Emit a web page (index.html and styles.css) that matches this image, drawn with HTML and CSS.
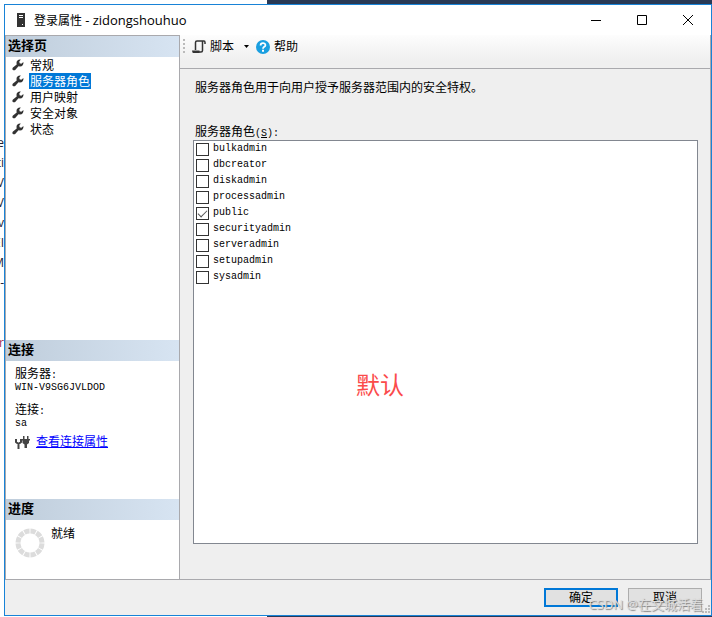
FILE: index.html
```html
<!DOCTYPE html>
<html lang="zh-CN">
<head>
    <meta charset="UTF-8">
    <meta name="viewport" content="width=device-width, initial-scale=1.0">
    <title>登录属性 - zidongshouhuo</title>
    <link rel="stylesheet" href="styles.css">
</head>
<body>
    <!-- 图标 -->
    <svg class="symbols" aria-hidden="true">
        <symbol id="wrench" viewBox="0 0 12 12">
            <path d="M8.800.6 7.300 2.400 7.600 4.200 9.300 4.700 11.400 2.900C11.800 5.400 10.300 7.400 8 7.400L6.500 7.300 3.200 10.900C2.200 12 .2 11 .4 9.700.4 9.200.7 8.800 1 8.500L4.700 5.400 4.500 4C4.400 1.800 6.500.1 8.800.6Z"/>
        </symbol>
    </svg>

    <!-- 后面的窗口 -->
    <div class="back" aria-hidden="true">
        <span>e</span><span>ti</span><span>V</span><span>V</span><span>v</span><span>EI</span><span>M</span><span>-</span><span></span><span></span><span class="red">r</span>
    </div>

    <div class="window">
        <div class="title-bar">
            <svg class="server" width="10" height="14" viewBox="0 0 10 14">
                <path fill="#333" d="M1 0h8v14H1z"/>
                <path fill="#fff" d="M3 2h4v1H3zM3 4h4v1H3zM6 11h1v1H6z"/>
            </svg>
            <h1>登录属性 <span>- zidongshouhuo</span></h1>
            <div class="win-btn">
                <button type="button" aria-label="最小化"><svg width="10" height="10"><path d="M0 5.500h10"/></svg></button>
                <button type="button" aria-label="最大化"><svg width="10" height="10"><path d="M.5.5h9v9h-9z"/></svg></button>
                <button type="button" aria-label="关闭"><svg width="10" height="10"><path d="M0 0l10 10M10 0L0 10"/></svg></button>
            </div>
        </div>

        <div class="content">
            <div class="side">
                <div class="pages">
                    <h2>选择页</h2>
                    <ul>
                        <li><svg><use href="#wrench"/></svg><a href="#">常规</a></li>
                        <li><svg><use href="#wrench"/></svg><a href="#" class="current">服务器角色</a></li>
                        <li><svg><use href="#wrench"/></svg><a href="#">用户映射</a></li>
                        <li><svg><use href="#wrench"/></svg><a href="#">安全对象</a></li>
                        <li><svg><use href="#wrench"/></svg><a href="#">状态</a></li>
                    </ul>
                </div>
                <div class="connect">
                    <h2>连接</h2>
                    <dl>
                        <dt>服务器<span class="mono">:</span></dt>
                        <dd class="mono">WIN-V9SG6JVLDOD</dd>
                        <dt>连接<span class="mono">:</span></dt>
                        <dd class="mono">sa</dd>
                    </dl>
                    <div class="view">
                        <svg width="15" height="14" viewBox="0 0 15 14">
                            <path fill="none" stroke="#444" stroke-width="2" d="M1 4v3L3.500 9 6 7V4M3.500 8.500V14"/>
                            <path fill="#444" d="M8 1h1.500v3H8zM12 1h1.500v3H12zM6.500 4h8.500v1.500h-1V8l-2 1.500V13H9.500V9.500L7.500 8V5.500h-1z"/>
                        </svg>
                        <a href="#">查看连接属性</a>
                    </div>
                </div>
                <div class="progress">
                    <h2>进度</h2>
                    <div class="state">
                        <svg width="30" height="30" viewBox="0 0 30 30">
                            <circle cx="15" cy="15" r="12" pathLength="120" fill="none" stroke="#dcdcdc" stroke-width="5" stroke-dasharray="8.500 1.500" stroke-dashoffset="-.75"/>
                        </svg>
                        <span>就绪</span>
                    </div>
                </div>
            </div>

            <div class="main">
                <div class="tool-bar">
                    <svg class="grip" width="2" height="15"><path fill="#bbb" d="M0 0h2v2H0zM0 4h2v2H0zM0 8h2v2H0zM0 12h2v2H0z"/></svg>
                    <button type="button" class="script">
                        <svg width="14" height="14" viewBox="0 0 14 14">
                            <path fill="none" stroke="#333" stroke-width="1.500" d="M3.500 10V2.500Q3.500 1 5 1H12Q13 1 13 2.500V4M10.500 1.500V10.500Q10.500 12 9 12H1"/>
                            <path fill="#333" d="M0 10.500h7.500v2.500H1.500Q0 13 0 10.500z"/>
                        </svg>
                        脚本
                        <svg class="arrow" width="5" height="3"><path d="M0 0h5L2.500 3z"/></svg>
                    </button>
                    <button type="button" class="help">
                        <svg width="14" height="14" viewBox="0 0 14 14">
                            <circle cx="7" cy="7" r="7" fill="#1a9fe0"/>
                            <path fill="none" stroke="#fff" stroke-width="1.800" d="M4.600 5.400C4.600 2.400 9.400 2.400 9.400 5.200 9.400 6.800 7 6.900 7 8.700"/>
                            <path fill="#fff" d="M6 9.800h2v1.900H6z"/>
                        </svg>
                        帮助
                    </button>
                </div>
                <div class="role">
                    <p>服务器角色用于向用户授予服务器范围内的安全特权。</p>
                    <h3 id="role-name">服务器角色<span class="mono">(<u>S</u>):</span></h3>
                    <div class="list mono" role="group" aria-labelledby="role-name">
                        <label><input type="checkbox">bulkadmin</label>
                        <label><input type="checkbox">dbcreator</label>
                        <label><input type="checkbox">diskadmin</label>
                        <label><input type="checkbox">processadmin</label>
                        <label><input type="checkbox" checked>public</label>
                        <label><input type="checkbox">securityadmin</label>
                        <label><input type="checkbox">serveradmin</label>
                        <label><input type="checkbox">setupadmin</label>
                        <label><input type="checkbox">sysadmin</label>
                        <span class="note">默认</span>
                    </div>
                </div>
            </div>
        </div>

        <div class="footer">
            <button type="button" class="ok">确定</button>
            <button type="button">取消</button>
            <svg class="size" width="8" height="8"><path fill="#bbb" d="M6 0h2v2H6zM3 3h2v2H3zM6 3h2v2H6zM0 6h2v2H0zM3 6h2v2H3zM6 6h2v2H6z"/></svg>
            <span class="mark">CSDN @在文城活着</span>
        </div>
    </div>
</body>
</html>
```

FILE: styles.css
```css
*{
    box-sizing: border-box;
}
body,h1,h2,h3,p,ul,dl,dd{
    margin: 0;padding: 0;
}
body{
    min-height: 100vh;padding: 4px 0 1px 4px;display: flex;position: relative;
    background: linear-gradient(90deg, #fff 267px, #293955 267px);
    font: 12px/16px "Open Sans", "Noto Sans CJK SC", sans-serif;color: #000;
}
button{
    font: inherit;color: inherit;border: 0;padding: 0;background: none;
}
h1,h3{
    font-size: 12px;font-weight: normal;
}
svg{
    display: block;flex: none;
}
.symbols{
    position: absolute;width: 0;height: 0;
}
.mono{
    font-family: "Liberation Mono", "Noto Sans CJK SC", monospace;font-size: 10px;
}

/* 后面的窗口 */
.back{
    position: absolute;left: 0;top: 133px;width: 4px;overflow: hidden;direction: rtl;color: #223;
}
.back span{
    display: block;height: 20px;line-height: 20px;
}
.back .red{
    color: #a03050;
}

.window{
    flex: 1;min-width: 0;display: flex;flex-direction: column;position: relative;
    border: 1px solid #1883d7;background: #efefef;
}
.title-bar{
    height: 30px;display: flex;align-items: center;background: #fff;padding-left: 11px;
}
.title-bar h1{
    flex: 1;margin-left: 8px;
}
.title-bar h1 span{
    font-size: 13px;
}
.win-btn{
    display: flex;
}
.win-btn button{
    width: 46px;height: 28px;display: flex;align-items: center;justify-content: center;
}
.win-btn path{
    fill: none;stroke: #000;
}

.content{
    flex: 1;display: flex;border-bottom: 1px solid #a9a9ad;
}
/* 左侧 */
.side{
    width: 175px;flex: none;display: flex;flex-direction: column;background: #fff;
    border: 1px solid #a9a9ad;border-bottom: 0;
}
.side h2{
    height: 21px;padding-left: 2px;font-size: 13px;line-height: 18px;
    background: linear-gradient(90deg, #bfcddb, #d7e4f2);
}
.pages{
    flex: 1;
}
.pages ul{
    list-style: none;
}
.pages li{
    height: 16px;display: flex;align-items: center;
}
.pages li svg{
    width: 12px;height: 12px;margin: 0 5px 0 6px;fill: #333;
}
.pages a{
    height: 16px;line-height: 18px;color: #000;text-decoration: none;padding: 0 1px;
}
.pages .current{
    background: #0078d7;color: #fff;
}
.connect{
    height: 159px;
}
.connect dl{
    padding: 6px 9px 0;
}
.connect dt{
    line-height: 14px;
}
.connect dd{
    line-height: 10px;margin-bottom: 10px;
}
.connect dd:last-child{
    margin-bottom: 5px;
}
.view{
    display: flex;align-items: center;gap: 6px;padding: 0 9px;
}
.view a{
    color: #00f;
}
.progress{
    height: 80px;
}
.state{
    display: flex;gap: 6px;padding: 8px 9px;
}
.state span{
    margin-top: -2px;
}

/* 右侧 */
.main{
    flex: 1;min-width: 0;display: flex;flex-direction: column;border-right: 1px solid #a9a9ad;
}
.tool-bar{
    height: 34px;display: flex;align-items: center;padding: 0 3px 10px;
    background: linear-gradient(#fdfdfd, #efefef 26px);border-bottom: 1px solid #a9a9ad;
}
.tool-bar button{
    display: flex;align-items: center;gap: 4px;
}
.script{
    margin-left: 7px;
}
.script .arrow{
    margin-left: 6px;
}
.help{
    margin-left: 7px;
}
.role{
    flex: 1;display: flex;flex-direction: column;padding: 11px 12px 35px 13px;
}
.role p,.role h3{
    padding-left: 2px;
}
.role h3{
    height: 16px;margin-top: 28px;
}
.list{
    flex: 1;position: relative;background: #fff;border: 1px solid #828790;
}
.list label{
    display: flex;align-items: center;height: 16px;padding-left: 2px;gap: 4px;
}
.list input{
    appearance: none;width: 13px;height: 13px;margin: 0;border: 1px solid #333;background: #fff;
}
.list input:checked::before{
    content: "";display: block;width: 8px;height: 4px;margin: 2px 0 0 1px;
    border: solid #555;border-width: 0 0 1px 1px;transform: rotate(-45deg);
}
.note{
    position: absolute;left: 162px;top: 230px;font-size: 24px;line-height: 34px;color: #fb4b4b;
}

/* 底部 */
.footer{
    height: 35px;display: flex;justify-content: flex-end;align-items: center;gap: 10px;padding: 0 9px;
}
.footer button{
    width: 74px;height: 19px;background: #e1e1e1;border: 1px solid #adadad;line-height: 17px;
}
.footer .ok{
    border: 2px solid #0078d7;line-height: 15px;
}
.size{
    position: absolute;right: 1px;bottom: 2px;
}
.mark{
    position: absolute;right: 8px;bottom: 3px;font-size: 13px;color: #ddd;text-shadow: 1px 1px 1px #888;
}
```
